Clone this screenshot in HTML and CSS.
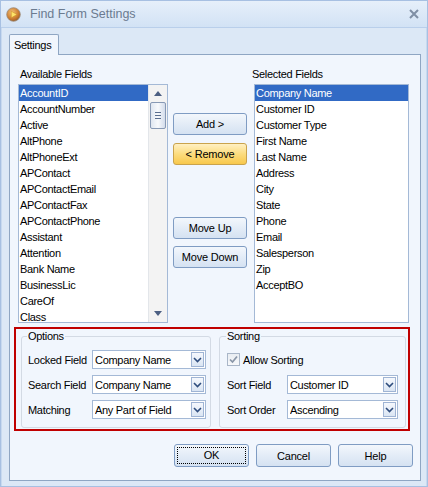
FILE: index.html
```html
<!DOCTYPE html>
<html>
<head>
<meta charset="utf-8">
<link rel="stylesheet" href="styles.css">
</head>
<body>
<div class="window">
  <div class="titlebar">
    <svg class="app-icon" width="15" height="15" viewBox="0 0 15 15">
      <defs>
        <radialGradient id="ig" cx="0.4" cy="0.35" r="0.7">
          <stop offset="0" stop-color="#f3c27a"/>
          <stop offset="0.7" stop-color="#c8782c"/>
          <stop offset="1" stop-color="#8a5a2e"/>
        </radialGradient>
      </defs>
      <circle cx="7.5" cy="7.5" r="6.8" fill="url(#ig)" stroke="#9c8a78" stroke-width="0.8"/>
      <path d="M5.3 4.2 L11 7.5 L5.3 10.8 Z" fill="#fde36a" stroke="#c98a1c" stroke-width="0.5"/>
    </svg>
    <span class="title">Find Form Settings</span>
    <svg class="close" width="10" height="10" viewBox="0 0 10 10">
      <path d="M1 1 L9 9 M9 1 L1 9" stroke="#7f8fa5" stroke-width="2"/>
    </svg>
  </div>
  <div class="client">
    <div class="tabs"><div class="tab">Settings</div></div>
    <div class="panel">
      <div class="lists">
        <div class="col-left">
          <div class="label">Available Fields</div>
          <div class="listbox">
            <div class="items">
              <div class="item selected">AccountID</div>
              <div class="item">AccountNumber</div>
              <div class="item">Active</div>
              <div class="item">AltPhone</div>
              <div class="item">AltPhoneExt</div>
              <div class="item">APContact</div>
              <div class="item">APContactEmail</div>
              <div class="item">APContactFax</div>
              <div class="item">APContactPhone</div>
              <div class="item">Assistant</div>
              <div class="item">Attention</div>
              <div class="item">Bank Name</div>
              <div class="item">BusinessLic</div>
              <div class="item">CareOf</div>
              <div class="item">Class</div>
            </div>
            <div class="scrollbar">
              <div class="arrow up"></div>
              <div class="thumb"><span></span><span></span><span></span></div>
              <div class="track"></div>
              <div class="arrow down"></div>
            </div>
          </div>
        </div>
        <div class="col-mid">
          <button class="btn">Add &gt;</button>
          <button class="btn hot">&lt; Remove</button>
          <button class="btn up-btn">Move Up</button>
          <button class="btn">Move Down</button>
        </div>
        <div class="col-right">
          <div class="label label-right">Selected Fields</div>
          <div class="listbox right-list">
            <div class="items">
              <div class="item selected">Company Name</div>
              <div class="item">Customer ID</div>
              <div class="item">Customer Type</div>
              <div class="item">First Name</div>
              <div class="item">Last Name</div>
              <div class="item">Address</div>
              <div class="item">City</div>
              <div class="item">State</div>
              <div class="item">Phone</div>
              <div class="item">Email</div>
              <div class="item">Salesperson</div>
              <div class="item">Zip</div>
              <div class="item">AcceptBO</div>
            </div>
          </div>
        </div>
      </div>

      <div class="redbox">
        <fieldset class="group options">
          <legend>Options</legend>
          <div class="row">
            <span class="flabel">Locked Field</span>
            <div class="combo"><span class="cval">Company Name</span><span class="dd"><svg width="9" height="6" viewBox="0 0 9 6"><path d="M1 1 L4.5 4.5 L8 1" fill="none" stroke="#2f4d7d" stroke-width="1.6"/></svg></span></div>
          </div>
          <div class="row">
            <span class="flabel">Search Field</span>
            <div class="combo"><span class="cval">Company Name</span><span class="dd"><svg width="9" height="6" viewBox="0 0 9 6"><path d="M1 1 L4.5 4.5 L8 1" fill="none" stroke="#2f4d7d" stroke-width="1.6"/></svg></span></div>
          </div>
          <div class="row">
            <span class="flabel">Matching</span>
            <div class="combo"><span class="cval">Any Part of Field</span><span class="dd"><svg width="9" height="6" viewBox="0 0 9 6"><path d="M1 1 L4.5 4.5 L8 1" fill="none" stroke="#2f4d7d" stroke-width="1.6"/></svg></span></div>
          </div>
        </fieldset>
        <fieldset class="group sorting">
          <legend>Sorting</legend>
          <div class="row">
            <span class="check"><svg width="9" height="9" viewBox="0 0 9 9"><path d="M1 4.5 L3.5 7 L8 1.5" fill="none" stroke="#8a96a8" stroke-width="1.7"/></svg></span>
            <span class="check-label">Allow Sorting</span>
          </div>
          <div class="row">
            <span class="flabel slabel">Sort Field</span>
            <div class="combo scombo"><span class="cval">Customer ID</span><span class="dd"><svg width="9" height="6" viewBox="0 0 9 6"><path d="M1 1 L4.5 4.5 L8 1" fill="none" stroke="#2f4d7d" stroke-width="1.6"/></svg></span></div>
          </div>
          <div class="row">
            <span class="flabel slabel">Sort Order</span>
            <div class="combo scombo"><span class="cval">Ascending</span><span class="dd"><svg width="9" height="6" viewBox="0 0 9 6"><path d="M1 1 L4.5 4.5 L8 1" fill="none" stroke="#2f4d7d" stroke-width="1.6"/></svg></span></div>
          </div>
        </fieldset>
      </div>

      <div class="footer">
        <button class="btn fbtn focus"><span>OK</span></button>
        <button class="btn fbtn">Cancel</button>
        <button class="btn fbtn">Help</button>
      </div>
    </div>
  </div>
</div>
</body>
</html>
```

FILE: styles.css
```css
* { box-sizing: border-box; }
html, body { margin: 0; padding: 0; }
body {
  font-family: "Liberation Sans", Arial, sans-serif;
  font-size: 11px;
  letter-spacing: -0.3px;
  color: #000;
  background: #dfeaf7;
}
.window {
  width: 428px;
  height: 487px;
  background: #dce8f6;
  border: 1px solid #a7c0e2;
  display: flex;
  flex-direction: column;
}
.titlebar {
  height: 27px;
  flex: none;
  display: flex;
  align-items: center;
  background: linear-gradient(#e6effa, #d2e2f5);
  border-bottom: 1px solid #b9cfeb;
  padding-left: 5px;
}
.app-icon { flex: none; margin-top: 1px; }
.title {
  margin-left: 9px;
  font-size: 12.5px;
  letter-spacing: 0;
  color: #6b7b90;
  flex: 1;
}
.close { margin-right: 8px; }
.client {
  flex: 1;
  display: flex;
  flex-direction: column;
  padding: 6px 5px 5px 7px;
  border-left: 1px solid #c7d9ef;
  border-right: 1px solid #c7d9ef;
}
.tabs { display: flex; height: 21px; flex: none; position: relative; z-index: 1; margin-bottom: -1px; }
.tab {
  width: 50px;
  height: 21px;
  border: 1px solid #8fa6c3;
  border-bottom: none;
  border-radius: 2px 2px 0 0;
  background: #f1f6fd;
  padding: 4px 0 0 4px;
  line-height: 13px;
}
.panel {
  flex: 1;
  background: #f1f6fd;
  border: 1px solid #8fa6c3;
  padding: 12px 10px 0 4px;
  display: flex;
  flex-direction: column;
}
.lists { display: flex; margin-left: 4px; }
.label { height: 17px; line-height: 14px; padding-left: 2px; }
.label-right { padding-left: 0; margin-left: -2px; }
.col-left { width: 150px; }
.listbox {
  height: 239px;
  border: 1px solid #a4b9d6;
  background: #fff;
  display: flex;
  overflow: hidden;
}
.items { flex: 1; overflow: hidden; }
.item { height: 16px; line-height: 16px; padding-left: 1px; white-space: nowrap; }
.item.selected { background: #316ac5; color: #fff; }
.scrollbar {
  width: 19px;
  flex: none;
  background: #f3f3f3;
  border-left: 1px solid #e3e6ea;
  display: flex;
  flex-direction: column;
  align-items: center;
}
.arrow { width: 17px; height: 17px; flex: none; position: relative; }
.arrow.up::after, .arrow.down::after {
  content: "";
  position: absolute;
  left: 4px;
  width: 0; height: 0;
  border-left: 4px solid transparent;
  border-right: 4px solid transparent;
}
.arrow.up::after { top: 6px; border-bottom: 5px solid #4c5f82; }
.arrow.down::after { top: 6px; border-top: 5px solid #4c5f82; }
.thumb {
  width: 16px;
  height: 27px;
  flex: none;
  border: 1px solid #8799b5;
  border-radius: 2px;
  background: linear-gradient(90deg, #dfe6f0, #f7f9fc 50%, #d3dceb);
  display: flex;
  flex-direction: column;
  align-items: center;
  justify-content: center;
  gap: 2px;
}
.thumb span { width: 6px; height: 1px; background: #5a6e8f; display: block; }
.track { flex: 1; }
.col-mid {
  width: 74px;
  margin-left: 5px;
  padding-top: 46px;
  display: flex;
  flex-direction: column;
}
.btn {
  font-family: inherit;
  font-size: 11px;
  letter-spacing: -0.2px;
  color: #000;
  height: 22px;
  width: 74px;
  border: 1px solid #7f9cc3;
  border-radius: 3px;
  background: linear-gradient(#f3f7fc, #e3ecf7 50%, #d5e2f2);
  padding: 0;
  margin: 0 0 8px 0;
}
.btn.hot {
  border-color: #c9a34d;
  background: linear-gradient(#fff0c2, #fcdc7e 50%, #f8c84c);
}
.btn.up-btn { margin-top: 44px; margin-bottom: 7px; }
.col-right { width: 155px; margin-left: 7px; }
.redbox {
  margin-top: 4px;
  height: 104px;
  border: 2px solid #c00000;
  display: flex;
  padding: 0 2px 0 5px;
  gap: 8px;
}
.group {
  margin: 0;
  border: 1px solid #d3dae4;
  border-radius: 3px;
  height: 99px;
  padding: 7px 4px 0 6px;
  min-width: 0;
}
.group legend {
  padding: 0 1px;
  margin-left: -1px;
  line-height: 14px;
  height: 14px;
}
.options { width: 192px; }
.sorting { width: 189px; padding-left: 7px; padding-right: 7px; }
.row { display: flex; align-items: center; height: 19px; margin-bottom: 6px; }
.flabel { width: 64px; flex: none; }
.slabel { width: 60px; }
.combo {
  width: 115px;
  height: 19px;
  border: 1px solid #a4b9d6;
  background: #fff;
  display: flex;
  align-items: center;
  padding: 1px 1px 1px 2px;
}
.scombo { width: 112px; }
.cval { flex: 1; white-space: nowrap; overflow: hidden; }
.dd {
  width: 13px;
  height: 15px;
  flex: none;
  border: 1px solid #9fb4d4;
  background: linear-gradient(#f5f8fd, #dae5f3);
  display: flex;
  align-items: center;
  justify-content: center;
}
.check {
  width: 13px;
  height: 13px;
  border: 1px solid #a9b6c8;
  background: linear-gradient(#e9edf2, #f7f8fa);
  display: flex;
  align-items: center;
  justify-content: center;
  flex: none;
}
.check-label { margin-left: 3px; }
.footer {
  display: flex;
  justify-content: flex-end;
  gap: 7px;
  margin-top: 13px;
  margin-right: -3px;
}
.fbtn { width: 75px; height: 23px; margin: 0; }
.fbtn.focus span {
  display: block;
  margin: 0 2px;
  height: 17px;
  line-height: 15px;
  border: 1px dotted #000;
}
```
